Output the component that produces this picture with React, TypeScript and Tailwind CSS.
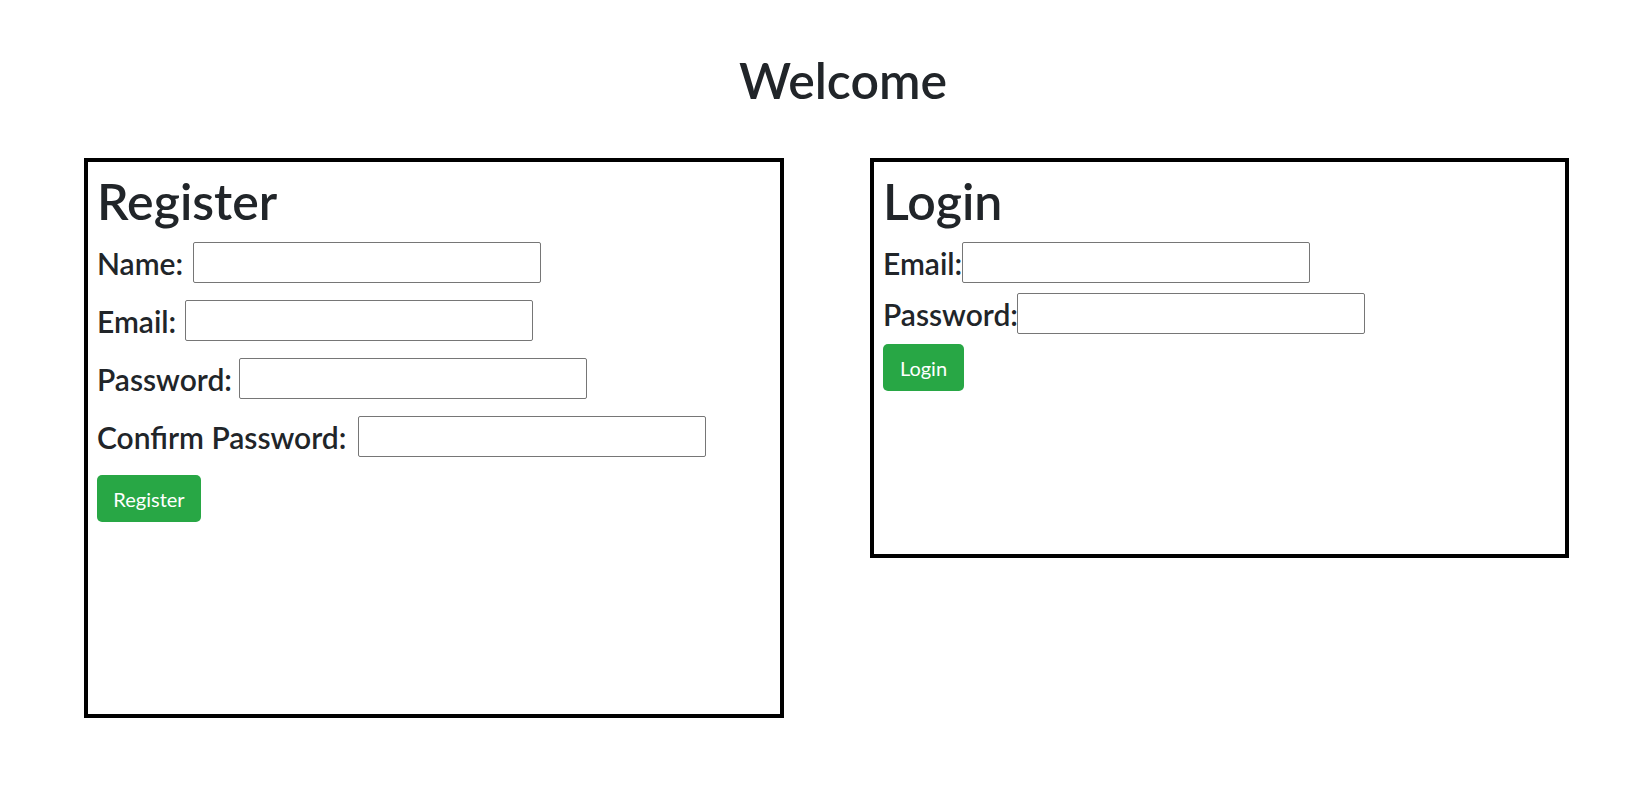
import React from 'react';

const font = { fontFamily: 'Lato, "Liberation Sans", sans-serif' };

const Field: React.FC<{ label: string; labelW: string; type?: string }> = ({ label, labelW, type = 'text' }) => (
  <div className="flex items-center h-[41px]">
    <label className={`${labelW} shrink-0 whitespace-nowrap text-[30px] leading-none font-semibold text-[#212529]`}>{label}</label>
    <input type={type} className="w-[348px] h-[41px] border border-[#767676] rounded-[2px] bg-white outline-none" />
  </div>
);

export default function App() {
  return (
    <div className="min-h-[802px] bg-white text-[#212529]" style={font}>
      {/* page title */}
      <h1 className="pt-[50px] pl-[41px] text-center text-[50px] leading-[60px] font-semibold">Welcome</h1>

      <div className="flex items-start gap-[86px] pl-[84px] pt-[48px]">
        {/* Register card */}
        <section className="w-[700px] h-[560px] border-4 border-black px-[9px]">
          <h2 className="mt-[9px] text-[50px] leading-[60px] font-semibold">Register</h2>
          <div className="mt-[11px] flex flex-col gap-[17px]">
            <Field label="Name:" labelW="w-[96px]" />
            <Field label="Email:" labelW="w-[88px]" />
            <Field label="Password:" labelW="w-[142px]" type="password" />
            <Field label="Confirm Password:" labelW="w-[261px]" type="password" />
          </div>
          <button className="mt-[18px] h-[47px] w-[104px] rounded-[5px] bg-[#28a745] text-[20px] text-white">Register</button>
        </section>

        {/* Login card */}
        <section className="w-[699px] h-[400px] border-4 border-black px-[9px]">
          <h2 className="mt-[9px] text-[50px] leading-[60px] font-semibold">Login</h2>
          <div className="mt-[11px] flex flex-col gap-[10px]">
            <Field label="Email:" labelW="w-[79px]" />
            <Field label="Password:" labelW="w-[134px]" type="password" />
          </div>
          <button className="mt-[10px] h-[47px] w-[81px] rounded-[5px] bg-[#28a745] text-[20px] text-white">Login</button>
        </section>
      </div>
    </div>
  );
}
